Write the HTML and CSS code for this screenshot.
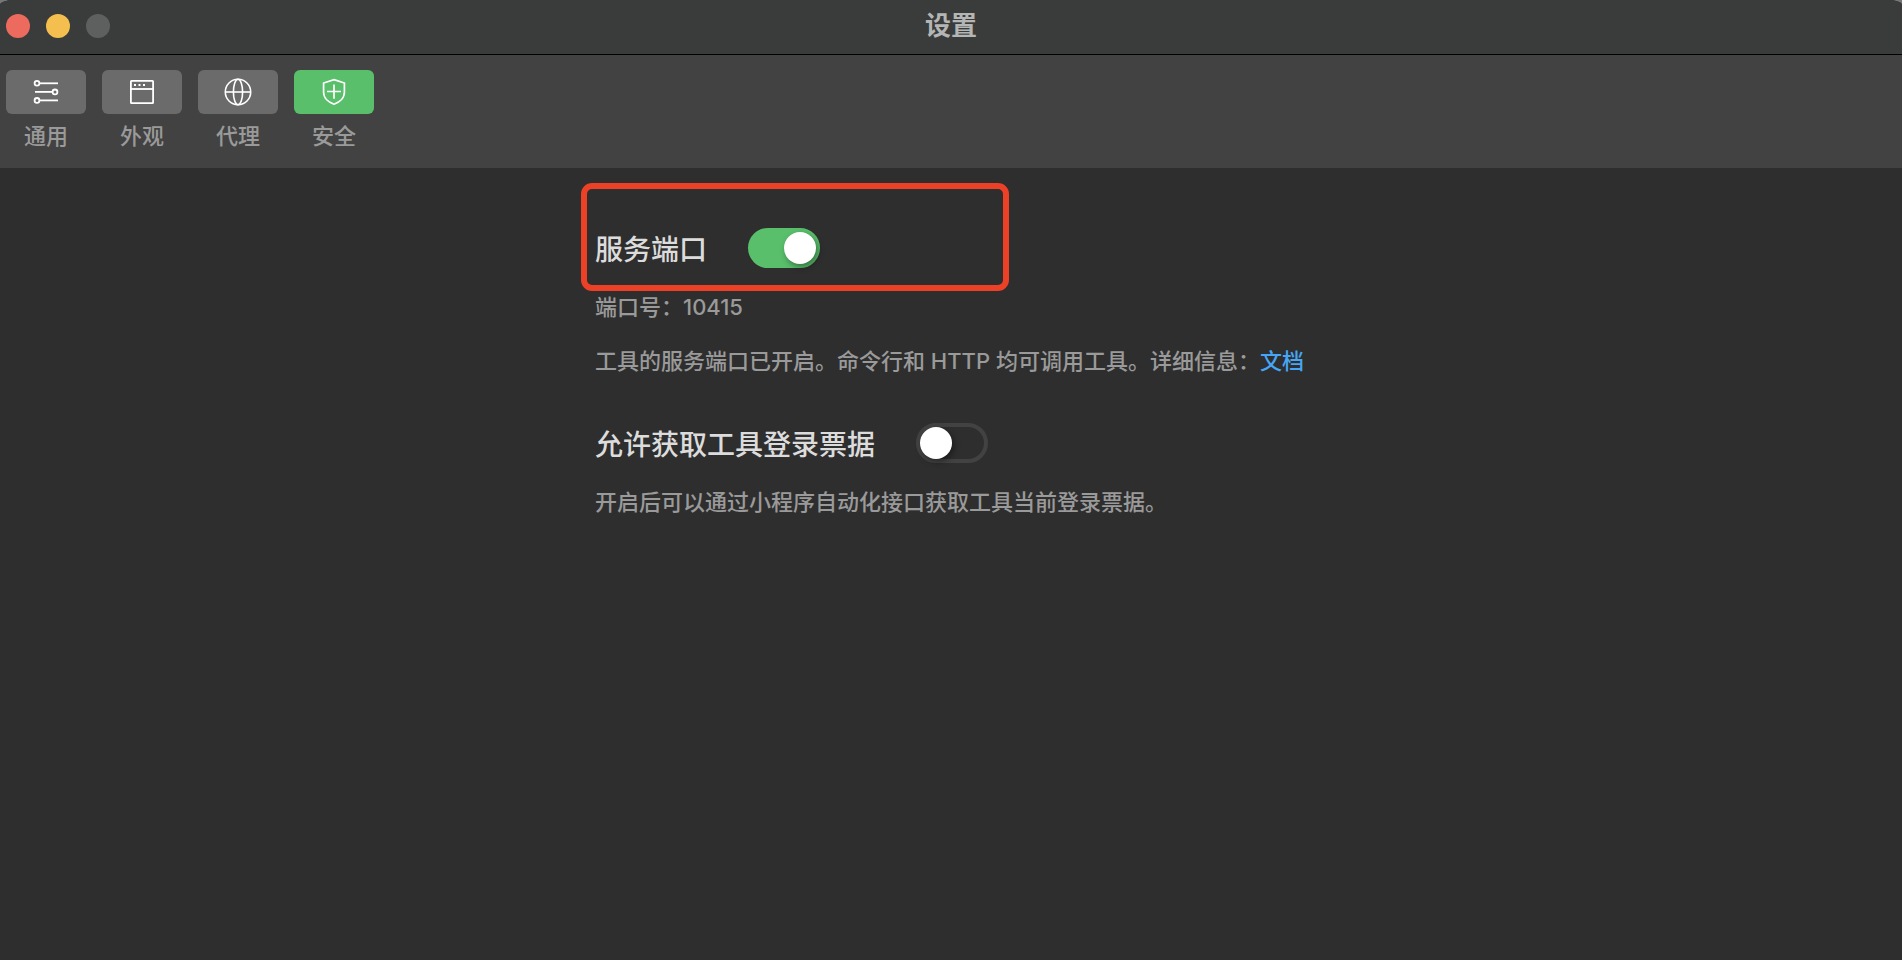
FILE: index.html
```html
<!DOCTYPE html>
<html lang="zh-CN">
<head>
<meta charset="utf-8">
<title>设置</title>
<link rel="stylesheet" href="styles.css">
</head>
<body>
<div class="window">
  <header class="titlebar">
    <div class="lights">
      <button class="light light-close" type="button" aria-label="关闭"></button>
      <button class="light light-minimize" type="button" aria-label="最小化"></button>
      <button class="light light-disabled" type="button" aria-label="缩放" disabled></button>
    </div>
    <h1 class="title">设置</h1>
  </header>
  <nav class="toolbar">
    <button class="tab" type="button">
      <span class="tab-icon">
        <svg width="28" height="28" viewBox="0 0 28 28" fill="none" stroke="#fff" stroke-width="1.8">
          <circle cx="5" cy="5.300" r="2.400"/><path d="M7.400 5.300H26"/>
          <circle cx="23" cy="13.900" r="2.400"/><path d="M3 13.900H20.600"/>
          <circle cx="5" cy="22.400" r="2.400"/><path d="M7.400 22.400H26"/>
        </svg>
      </span>
      <span>通用</span>
    </button>
    <button class="tab" type="button">
      <span class="tab-icon">
        <svg width="28" height="28" viewBox="0 0 28 28" fill="none" stroke="#fff" stroke-width="1.8">
          <rect x="2.900" y="2.900" width="22.200" height="22.200" rx=".6"/><path d="M2.900 11H25.100"/>
          <path d="M6 7h2M10.500 7h2M15 7h2" stroke-width="2"/>
        </svg>
      </span>
      <span>外观</span>
    </button>
    <button class="tab" type="button">
      <span class="tab-icon">
        <svg width="28" height="28" viewBox="0 0 28 28" fill="none" stroke="#fff" stroke-width="1.6">
          <circle cx="14" cy="14" r="12.700"/><ellipse cx="14" cy="14" rx="4.600" ry="12.700"/><path d="M1.300 14H26.700"/>
        </svg>
      </span>
      <span>代理</span>
    </button>
    <button class="tab tab-active" type="button" aria-current="page">
      <span class="tab-icon">
        <svg width="28" height="28" viewBox="0 0 28 28" fill="none" stroke="#fff" stroke-width="1.700">
          <path d="M14 1.600 24.400 5V14.200C24.400 20 19.500 24.300 14 26.200 8.500 24.300 3.600 20 3.600 14.200V5Z"/>
          <path d="M14 6.500V20.700M7 13.500H21"/>
        </svg>
      </span>
      <span>安全</span>
    </button>
  </nav>
  <main class="content">
    <section class="setting setting-port">
      <div class="setting-row">
        <label class="setting-name" for="port">服务端口</label>
        <input class="switch" id="port" type="checkbox" role="switch" checked>
      </div>
      <p class="note">端口号：10415</p>
      <p class="note note-detail">工具的服务端口已开启。命令行和 HTTP 均可调用工具。详细信息：<a class="link" href="#">文档</a></p>
    </section>
    <section class="setting">
      <div class="setting-row">
        <label class="setting-name" for="ticket">允许获取工具登录票据</label>
        <input class="switch" id="ticket" type="checkbox" role="switch">
      </div>
      <p class="note">开启后可以通过小程序自动化接口获取工具当前登录票据。</p>
    </section>
  </main>
</div>
</body>
</html>
```
FILE: styles.css
```css
*,
*::before {
  box-sizing: border-box;
}

body {
  margin: 0;
  background: #777;
  color: #9a9a9a;
  font: 500 22px/32px Inter, "Noto Sans CJK SC", sans-serif;
}

button {
  padding: 0;
  border: 0;
  background: none;
  color: inherit;
  font: inherit;
}

.window {
  display: flex;
  flex-direction: column;
  min-height: 100vh;
  border-radius: 14px 14px 0 0 / 5px 5px 0 0;
  background: #2e2e2e;
}

.titlebar {
  display: grid;
  grid-template-columns: 1fr auto 1fr;
  align-items: center;
  height: 55px;
  padding: 0 6px 2px;
  border-bottom: 1px solid #000;
  border-radius: 14px 14px 0 0 / 5px 5px 0 0;
  background: #3a3c3b;
}

.lights {
  display: flex;
  gap: 16px;
}

.light {
  width: 24px;
  height: 24px;
  border-radius: 50%;
}

.light-close {
  background: #ed6a5f;
}

.light-minimize {
  background: #f5bf4f;
}

.light-disabled {
  background: #5e605f;
}

.title {
  margin: 0;
  color: #b4b6b5;
  font-size: 26px;
  font-weight: 700;
}

.toolbar {
  display: flex;
  gap: 16px;
  padding: 15px 6px 16px;
  background: #424242;
}

.tab {
  display: flex;
  flex-direction: column;
  align-items: center;
  gap: 6px;
}

.tab-icon {
  display: flex;
  align-items: center;
  justify-content: center;
  width: 80px;
  height: 44px;
  border-radius: 6px;
  background: #6b6b6b;
}

.tab-active .tab-icon {
  background: #59bf6b;
}

.content {
  display: flex;
  flex-direction: column;
  gap: 46px;
  width: 712px;
  max-width: 100%;
  margin: 0 auto;
  padding-top: 60px;
}

.setting {
  position: relative;
}

.setting-port::before {
  content: "";
  position: absolute;
  top: -45px;
  left: -14px;
  width: 428px;
  height: 108px;
  border: 6px solid #ec4027;
  border-radius: 11px;
  pointer-events: none;
}

.setting-row {
  display: flex;
  align-items: center;
  gap: 41px;
  height: 40px;
  margin-bottom: 23px;
}

.setting-name {
  padding-top: 4px;
  color: #dcdcdc;
  font-size: 28px;
  line-height: 40px;
}

.switch {
  appearance: none;
  display: flex;
  width: 72px;
  height: 40px;
  margin: 0;
  padding: 0;
  border: 4px solid #424242;
  border-radius: 20px;
}

.switch::before {
  content: "";
  width: 32px;
  height: 32px;
  border-radius: 50%;
  background: #fff;
  box-shadow: 2px 3px 6px rgba(0, 0, 0, 0.4);
}

.switch:checked {
  justify-content: flex-end;
  border-color: #59bf6b;
  background: #59bf6b;
}

.note {
  margin: 0;
}

.note-detail {
  margin-top: 22px;
}

.link {
  color: #46a6f5;
  text-decoration: none;
}
```
